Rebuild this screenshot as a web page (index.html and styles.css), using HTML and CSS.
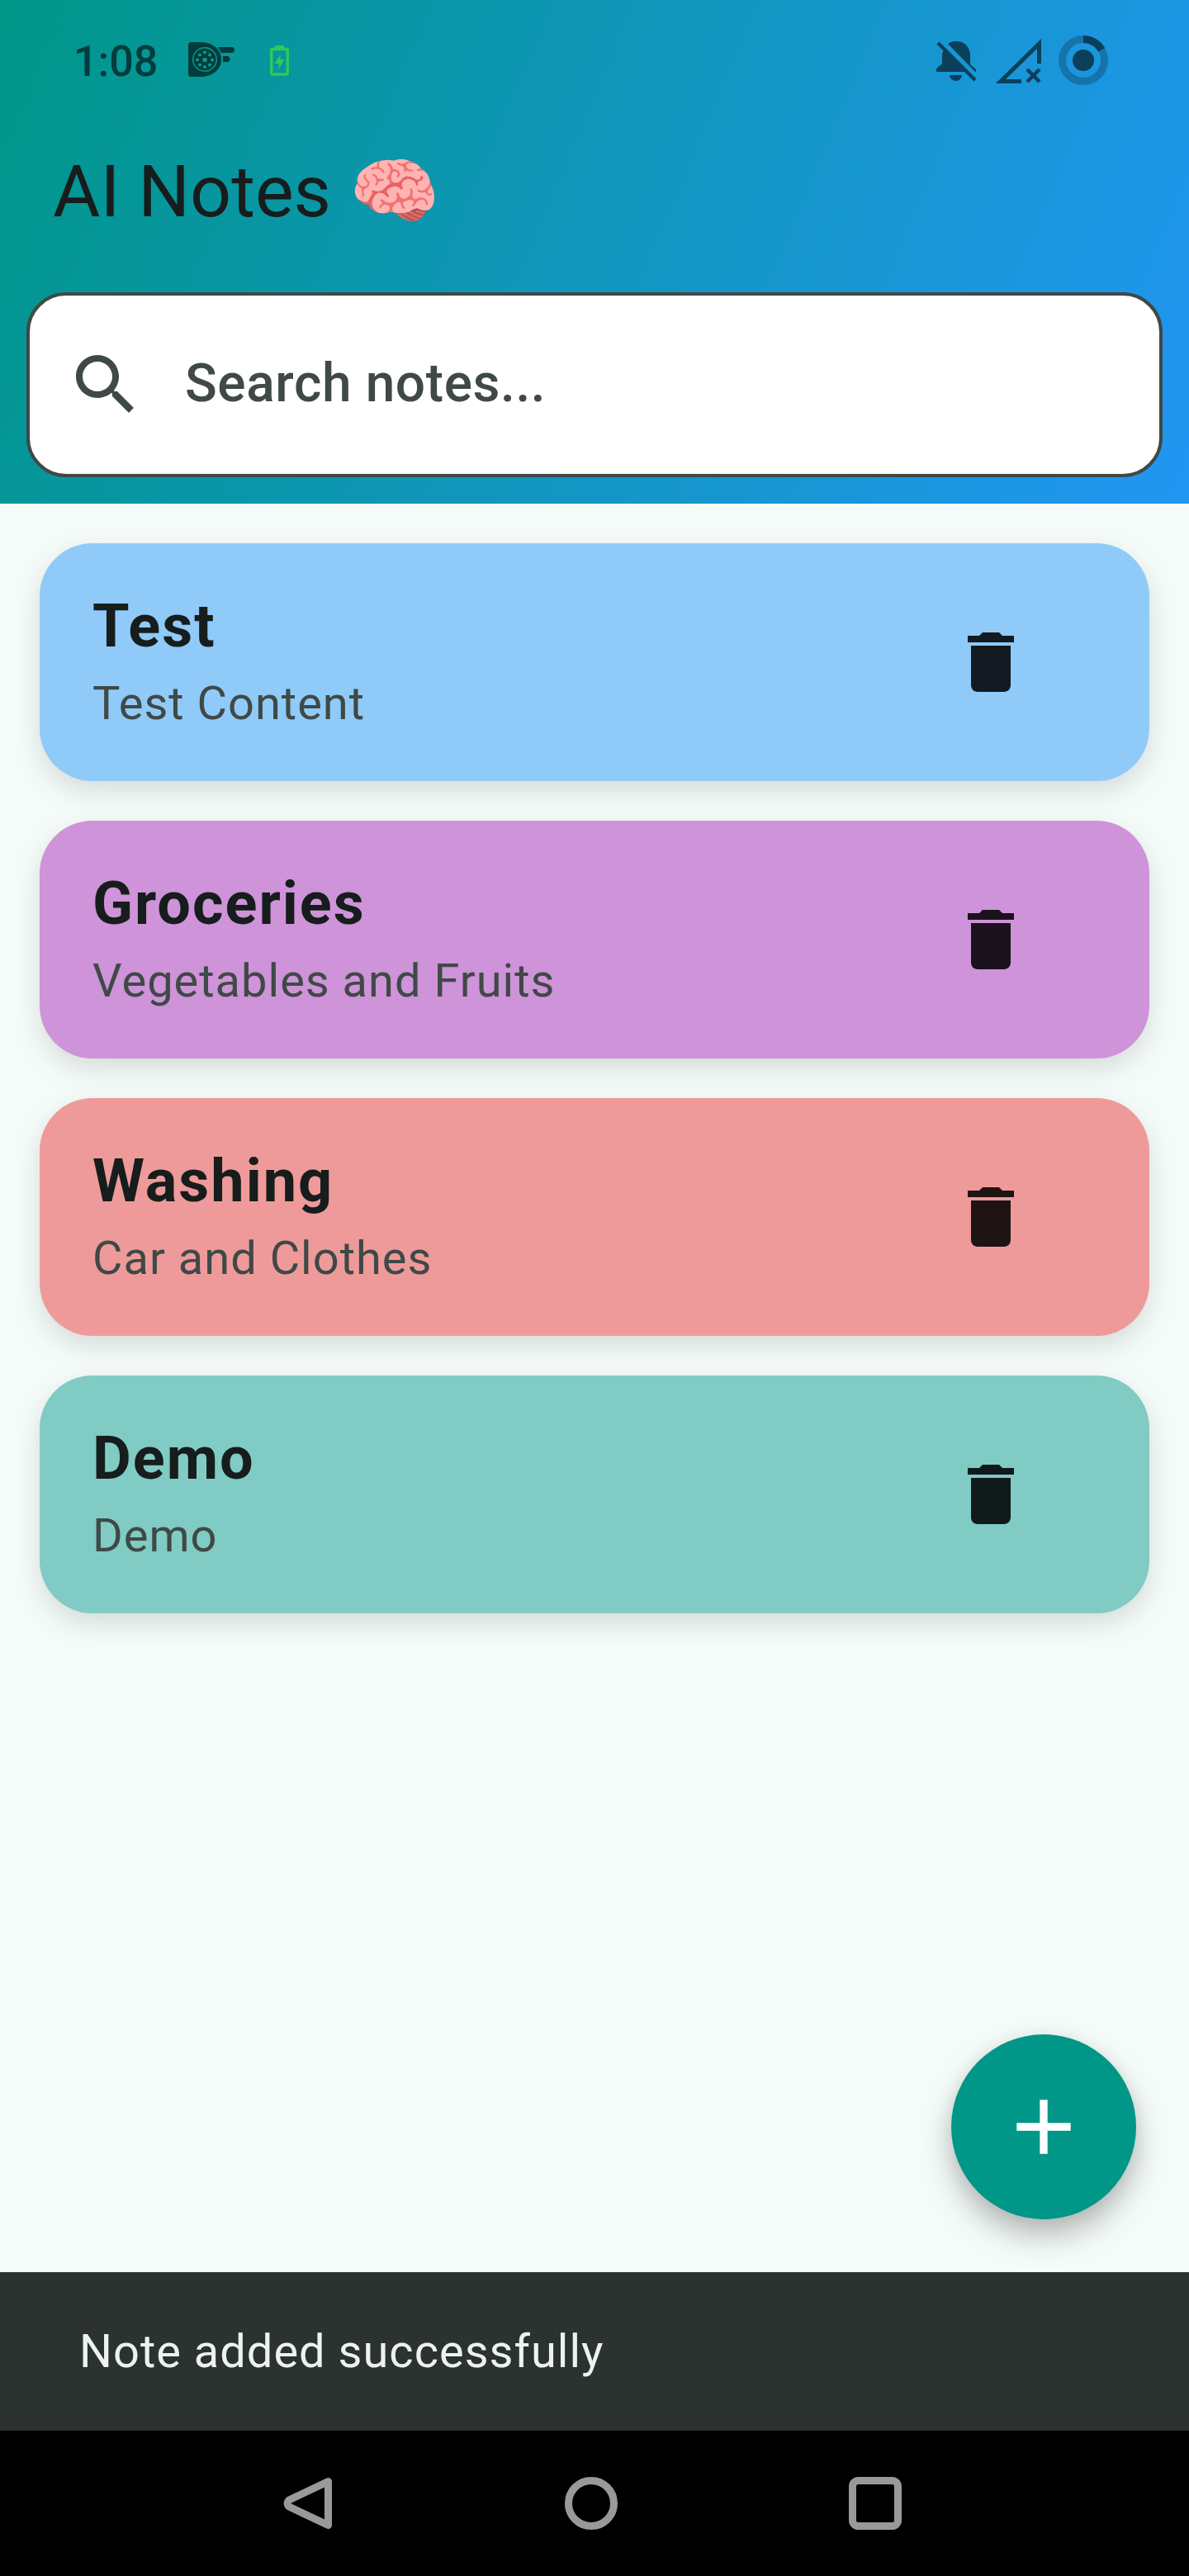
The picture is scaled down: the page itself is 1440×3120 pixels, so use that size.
FILE: index.html
```html
<!DOCTYPE html>
<html lang="en">
<head>
<meta charset="utf-8">
<title>AI Notes</title>
<link rel="stylesheet" href="styles.css">
</head>
<body>
<svg width="0" height="0" class="defs">
  <symbol id="trash" viewBox="0 0 24 24"><path d="M6 19c0 1.1.9 2 2 2h8c1.1 0 2-.9 2-2V7H6v12zM19 4h-3.5l-1-1h-5l-1 1H5v2h14V4z"/></symbol>
</svg>
<div class="screen">
  <header class="header">
    <div class="status">
      <span class="time">1:08</span>
      <svg class="st-app" width="60" height="60" viewBox="226 43 60 60" fill="#003d3c">
        <path d="M232 51h10c16 0 26 9 26 21s-10 21-26 21h-10q-4 0-4-4V55q0-4 4-4z"/>
        <path d="M264 57h16.500a3.500 3.500 0 0 1 0 7H268zM270 68h5a3.500 3.500 0 0 1 0 7h-5z"/>
        <g fill="#07968f">
          <path fill-rule="evenodd" d="M248 57a15 15 0 1 0 0 30a15 15 0 1 0 0-30zM248 58.500a13.500 13.500 0 1 1 0 27a13.500 13.500 0 1 1 0-27z"/>
          <circle cx="248" cy="72.500" r="2.800"/><circle cx="248" cy="63.500" r="2.100"/><circle cx="248" cy="81" r="2.100"/>
          <circle cx="239" cy="72.500" r="2.100"/><circle cx="257" cy="72.500" r="2.100"/><circle cx="242" cy="66.500" r="2.100"/>
          <circle cx="254" cy="66.500" r="2.100"/><circle cx="242" cy="78.500" r="2.100"/><circle cx="254" cy="78.500" r="2.100"/>
        </g>
      </svg>
      <svg class="st-batt" width="30" height="60" viewBox="323 43 30 60" fill="#32c858">
        <path d="M333 58v-1.500q0-1.500 1.500-1.500h8q1.500 0 1.500 1.500V58z"/>
        <rect x="328.750" y="59.500" width="19.500" height="30.500" rx="1.500" fill="none" stroke="#32c858" stroke-width="3.500"/>
        <path d="M340 66l-7.500 11h5.500l-1 7.500 7.500-12.500h-5z"/>
      </svg>
      <span class="spacer"></span>
      <svg class="st-bell" width="60" height="60" viewBox="1128 43 60 60" fill="#0b3f5c">
        <path d="M1148 53q4-3 10-3c10 0 17 7 17 17v11l7 6v3h-1zM1143 61l26 26h-35v-4l7-6V67q0-4 2-6zM1150 91h15q-1 7-7.500 7t-7.500-7z"/>
        <path d="M1136 52l45 45" stroke="#0b3f5c" stroke-width="4.500"/>
      </svg>
      <svg class="st-signal" width="60" height="60" viewBox="1204 43 60 60" fill="none" stroke="#0b3f5c">
        <path d="M1258.500 77V53L1212 98.500H1237" stroke-width="5"/>
        <path d="M1244 84l15 15M1259 84l-15 15" stroke-width="4.500"/>
      </svg>
      <svg class="st-ring" width="60" height="60" viewBox="1282 43 60 60" fill="none">
        <circle cx="1312" cy="73" r="25.500" stroke="#1673ab" stroke-width="9"/>
        <path d="M1312 47.500A25.500 25.500 0 0 1 1334.100 60.250" stroke="#0b3f5c" stroke-width="9"/>
        <circle cx="1312" cy="73" r="13" fill="#0b3f5c"/>
      </svg>
    </div>
    <h1 class="title">AI Notes <span class="brain">🧠</span></h1>
    <div class="search">
      <svg width="96" height="96" viewBox="0 0 24 24" fill="#3f4946"><path d="M15.500 14h-.79l-.28-.27C15.410 12.590 16 11.110 16 9.500 16 5.910 13.090 3 9.500 3S3 5.910 3 9.500 5.910 16 9.500 16c1.610 0 3.090-.59 4.230-1.570l.27.28v.79l5 4.990L20.490 19l-4.990-5zm-6 0C7.010 14 5 11.990 5 9.500S7.010 5 9.500 5 14 7.010 14 9.500 11.990 14 9.500 14z"/></svg>
      <span class="placeholder">Search notes...</span>
    </div>
  </header>
  <main class="notes">
    <article class="note blue"><div class="body"><h2>Test</h2><p>Test Content</p></div><svg class="del"><use href="#trash"/></svg></article>
    <article class="note purple"><div class="body"><h2>Groceries</h2><p>Vegetables and Fruits</p></div><svg class="del"><use href="#trash"/></svg></article>
    <article class="note red"><div class="body"><h2>Washing</h2><p>Car and Clothes</p></div><svg class="del"><use href="#trash"/></svg></article>
    <article class="note teal"><div class="body"><h2>Demo</h2><p>Demo</p></div><svg class="del"><use href="#trash"/></svg></article>
    <button class="fab" aria-label="Add note"><svg width="112" height="112" viewBox="0 0 24 24" fill="#fff"><path d="M19 13h-6v6h-2v-6H5v-2h6V5h2v6h6v2z"/></svg></button>
  </main>
  <div class="snackbar">Note added successfully</div>
  <nav class="navbar">
    <svg width="72" height="72" viewBox="336 2996 72 72"><path d="M397.500 3005.500v53L350 3036q-4-4 0-8z"/></svg>
    <svg width="72" height="72" viewBox="680 2996 72 72"><circle cx="716" cy="3032" r="27.500"/></svg>
    <svg width="72" height="72" viewBox="1024 2996 72 72"><rect x="1032.500" y="3004.500" width="55" height="55" rx="7"/></svg>
  </nav>
</div>
</body>
</html>
```
FILE: styles.css
```css
* { box-sizing: border-box; }
body { margin: 0; font-family: Roboto, "Liberation Sans", sans-serif; background: #f4fbf8; }
.defs { display: block; }
.screen { width: 1440px; height: 3120px; display: flex; flex-direction: column; background: #f4fbf8; overflow: hidden; }

.header { height: 610px; flex: none; background: linear-gradient(112.96deg, #009688, #2196f3); }
.status { height: 146px; display: flex; align-items: center; padding: 0 98px 0 89px; }
.status svg { flex: none; }
.time { width: 137px; font-size: 52px; line-height: 60px; font-weight: 500; color: #003d3c; padding-top: 4px; }
.st-batt { margin-left: 37px; }
.spacer { flex: 1; }
.st-signal { margin-left: 16px; }
.st-ring { margin-left: 18px; }

.title { margin: 30px 0 0; padding-left: 64px; height: 178px; font-size: 88px; line-height: 112px; font-weight: 400; color: #161d1c; white-space: nowrap; }
.search { height: 224px; margin: 0 32px; padding-left: 44px; display: flex; align-items: center; gap: 48px; background: #fff; border: 4px solid #3f4946; border-radius: 48px; }
.placeholder { padding-bottom: 3px; font-size: 64px; line-height: 96px; font-weight: 500; letter-spacing: .6px; color: #3f4946; }

.notes { flex: 1; position: relative; padding: 48px; display: flex; flex-direction: column; gap: 48px; }
.note { height: 288px; flex: none; border-radius: 64px; padding: 0 144px 0 64px; display: flex; align-items: center; justify-content: space-between; box-shadow: 0 12px 32px rgba(0, 0, 0, .13); }
.note h2 { margin: 0 0 5px; font-size: 72px; line-height: 96px; font-weight: 700; letter-spacing: 2px; color: #161d1c; }
.note p { margin: 0; font-size: 56px; line-height: 80px; letter-spacing: 1px; color: #3f4946; }
.body { padding-bottom: 1px; }
.del { width: 96px; height: 96px; fill: rgba(0, 0, 0, .87); }
.blue { background: #90caf9; }
.purple { background: #ce93d8; }
.red { background: #ef9a9a; }
.teal { background: #80cbc4; }

.fab { position: absolute; right: 64px; bottom: 64px; width: 224px; height: 224px; padding: 0; border: 0; border-radius: 50%; background: #009688; display: flex; align-items: center; justify-content: center; box-shadow: 0 20px 36px rgba(0, 0, 0, .26), 0 0 20px rgba(0, 0, 0, .06); }

.snackbar { height: 192px; flex: none; padding-left: 96px; background: #2b3230; color: #ecf2ef; font-size: 56px; line-height: 192px; letter-spacing: 1px; }
.navbar { height: 176px; flex: none; padding: 0 344px 0 336px; display: flex; align-items: center; justify-content: space-between; background: #000; }
.navbar svg { fill: none; stroke: #999; stroke-width: 9; stroke-linejoin: round; }
```
